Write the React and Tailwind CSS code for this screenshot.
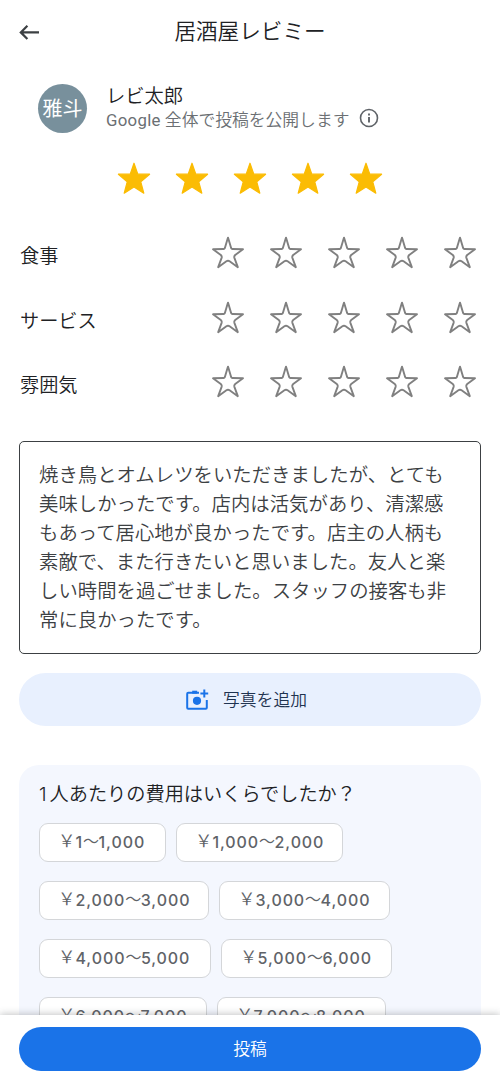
import { useState } from "react";

const StarIcon = ({ filled }) => (
  <svg width="34" height="34" viewBox="0 0 34 34" className="block">
    {filled ? (
      <path
        d="M17 2.2 20.8 13.2 32.6 13.2 23.8 20.8 26.8 32.2 17 26 7.2 32.2 10.2 20.8 1.4 13.2 13.2 13.2Z"
        fill="#fbbc04"
        stroke="#fbbc04"
        strokeWidth="1.2"
        strokeLinejoin="round"
      />
    ) : (
      <path
        d="M17 2.6 20.2 13.2Q20.5 14 21.4 14L32 14.2 24.2 20Q22.9 21.2 23.3 22.6L26.8 32.2 18.6 26.2Q17 25.2 15.4 26.2L7.2 32.2 10.7 22.6Q11.1 21.2 9.8 20L2 14.2 12.6 14Q13.5 14 13.8 13.2Z"
        fill="none"
        stroke="#808080"
        strokeWidth="1.9"
        strokeLinejoin="round"
      />
    )}
  </svg>
);

const Stars = ({ value, onChange }) => (
  <div className="flex gap-6">
    {[1, 2, 3, 4, 5].map((n) => (
      <button key={n} type="button" onClick={() => onChange(n)}>
        <StarIcon filled={n <= value} />
      </button>
    ))}
  </div>
);

const categories = ["食事", "サービス", "雰囲気"];

const prices = [
  { from: "1", to: "1,000", size: "w-[127px]" },
  { from: "1,000", to: "2,000", size: "w-[167px]" },
  { from: "2,000", to: "3,000", size: "w-[170px]" },
  { from: "3,000", to: "4,000", size: "w-[171px]" },
  { from: "4,000", to: "5,000", size: "w-[172px]" },
  { from: "5,000", to: "6,000", size: "w-[171px]" },
  { from: "6,000", to: "7,000", size: "w-[168px]" },
  { from: "7,000", to: "8,000", size: "w-[169px]" },
];

const App = () => {
  const [rating, setRating] = useState(5);
  const [scores, setScores] = useState([0, 0, 0]);
  const [price, setPrice] = useState(null);

  return (
    <div className="flex h-[1082px] w-[500px] flex-col overflow-hidden bg-white font-['Roboto','Noto_Sans_CJK_JP',sans-serif] font-[350] text-[#202124]">
      <div className="min-h-0 flex-1 overflow-hidden px-[19px]">
        {/* Header */}
        <header className="grid h-16 grid-cols-[22px_1fr_22px] items-center">
          <button type="button">
            <svg width="20" height="16" viewBox="0 0 20 16" fill="none" stroke="#3c4043" strokeWidth="2.2">
              <path d="M20 8.4H2M8.4 1.8 1.8 8.4l6.6 6.6" />
            </svg>
          </button>
          <h1 className="text-center text-[21.6px] leading-8 font-[350]">居酒屋レビミー</h1>
        </header>

        {/* User */}
        <div className="mt-5 flex items-center pl-[19px]">
          <div className="flex size-[49px] items-center justify-center rounded-full bg-[#78909c] text-[20px] font-normal text-white">
            雅斗
          </div>
          <div className="ml-[19px]">
            <p className="text-[19.3px] leading-6">レビ太郎</p>
            <div className="-mt-px flex items-center text-[#6b6f73]">
              <p className="text-[16.8px] leading-6">
                <span className="font-normal tracking-[0.3px]">Google</span> 全体で投稿を公開します
              </p>
              <svg width="20" height="20" viewBox="0 0 20 20" className="mb-1 ml-2.5" fill="none" stroke="#5f6368">
                <circle cx="10" cy="10" r="8.5" strokeWidth="1.6" />
                <path d="M10 9v5.4M10 5.4v2" strokeWidth="1.9" />
              </svg>
            </div>
          </div>
        </div>

        <div className="mt-7 flex justify-center">
          <Stars value={rating} onChange={setRating} />
        </div>

        {/* Category ratings */}
        <div className="mt-10 flex flex-col gap-[30.5px]">
          {categories.map((name, i) => (
            <div key={name} className="flex h-[34px] items-center justify-between pr-1">
              <span className="pt-2.5 pl-px text-[19.2px] leading-7">{name}</span>
              <Stars
                value={scores[i]}
                onChange={(n) => setScores(scores.map((s, j) => (j === i ? n : s)))}
              />
            </div>
          ))}
        </div>

        {/* Review text */}
        <p className="mt-[43px] h-[213px] rounded-[5px] border-[1.5px] border-[#3c4043] pt-[19px] pr-[22px] pl-[19px] text-[19.33px] leading-[29px] tracking-[0.06px] text-[#3c4043]">
          焼き鳥とオムレツをいただきましたが、とても美味しかったです。店内は活気があり、清潔感もあって居心地が良かったです。店主の人柄も素敵で、また行きたいと思いました。友人と楽しい時間を過ごせました。スタッフの接客も非常に良かったです。
        </p>

        {/* Add photo */}
        <button
          type="button"
          className="mt-[19px] flex h-[53px] w-full items-center justify-center rounded-full bg-[#e8f0fe] pr-2 text-[16.8px]"
        >
          <svg width="24" height="22" viewBox="0 0 24 22" fill="none" stroke="#1a73e8" strokeWidth="2">
            <path d="M14 3.8H3.2a1 1 0 0 0-1 1V18.8a1 1 0 0 0 1 1h17.6a1 1 0 0 0 1-1V11" />
            <path d="M7.2 3.2h5" strokeWidth="3" />
            <path d="M19.3 0.6v7.8M15.4 4.5h7.8" />
            <circle cx="12" cy="11.8" r="4.1" fill="#1a73e8" stroke="none" />
          </svg>
          <span className="ml-3.5 pt-0.5 text-[#1f3350]">写真を追加</span>
        </button>

        {/* Price range */}
        <section className="mt-[39px] rounded-[20px] bg-[#f4f7fe] px-5 pt-3.5">
          <h2 className="text-[19.2px] leading-[30px] font-[350]">
            <span className="mr-[3px] font-['Inter']">1</span>人あたりの費用はいくらでしたか？
          </h2>
          <div className="mt-[13px] flex flex-wrap gap-x-2.5 gap-y-[19px]">
            {prices.map(({ from, to, size }) => (
              <button
                key={from}
                type="button"
                onClick={() => setPrice(from)}
                className={`flex h-[39px] items-center rounded-[9px] border pb-0.5 pl-[18px] font-['Inter','Noto_Sans_CJK_JP',sans-serif] text-[16px] font-medium tracking-[0.9px] whitespace-nowrap text-[#5f6368] ${size} ${
                  price === from ? "border-[#1a73e8] bg-[#e8f0fe]" : "border-[#d4d6d9] bg-white"
                }`}
              >
                <span className="text-[17.5px] font-[350] tracking-normal">￥</span>
                <span>{from}</span>
                <span className="pb-1 font-['Noto_Sans_CJK_JP'] font-[350] tracking-[-0.5px]">〜</span>
                <span>{to}</span>
              </button>
            ))}
          </div>
        </section>
      </div>

      {/* Submit */}
      <footer className="relative h-[67px] shrink-0 bg-white px-[19px] pt-[12px] shadow-[0_-1px_7px_rgba(60,64,67,0.3)]">
        <button type="button" className="h-11 w-full rounded-full bg-[#1a73e8] pt-0.5 text-[16.8px] text-white">
          投稿
        </button>
      </footer>
    </div>
  );
};

export default App;
